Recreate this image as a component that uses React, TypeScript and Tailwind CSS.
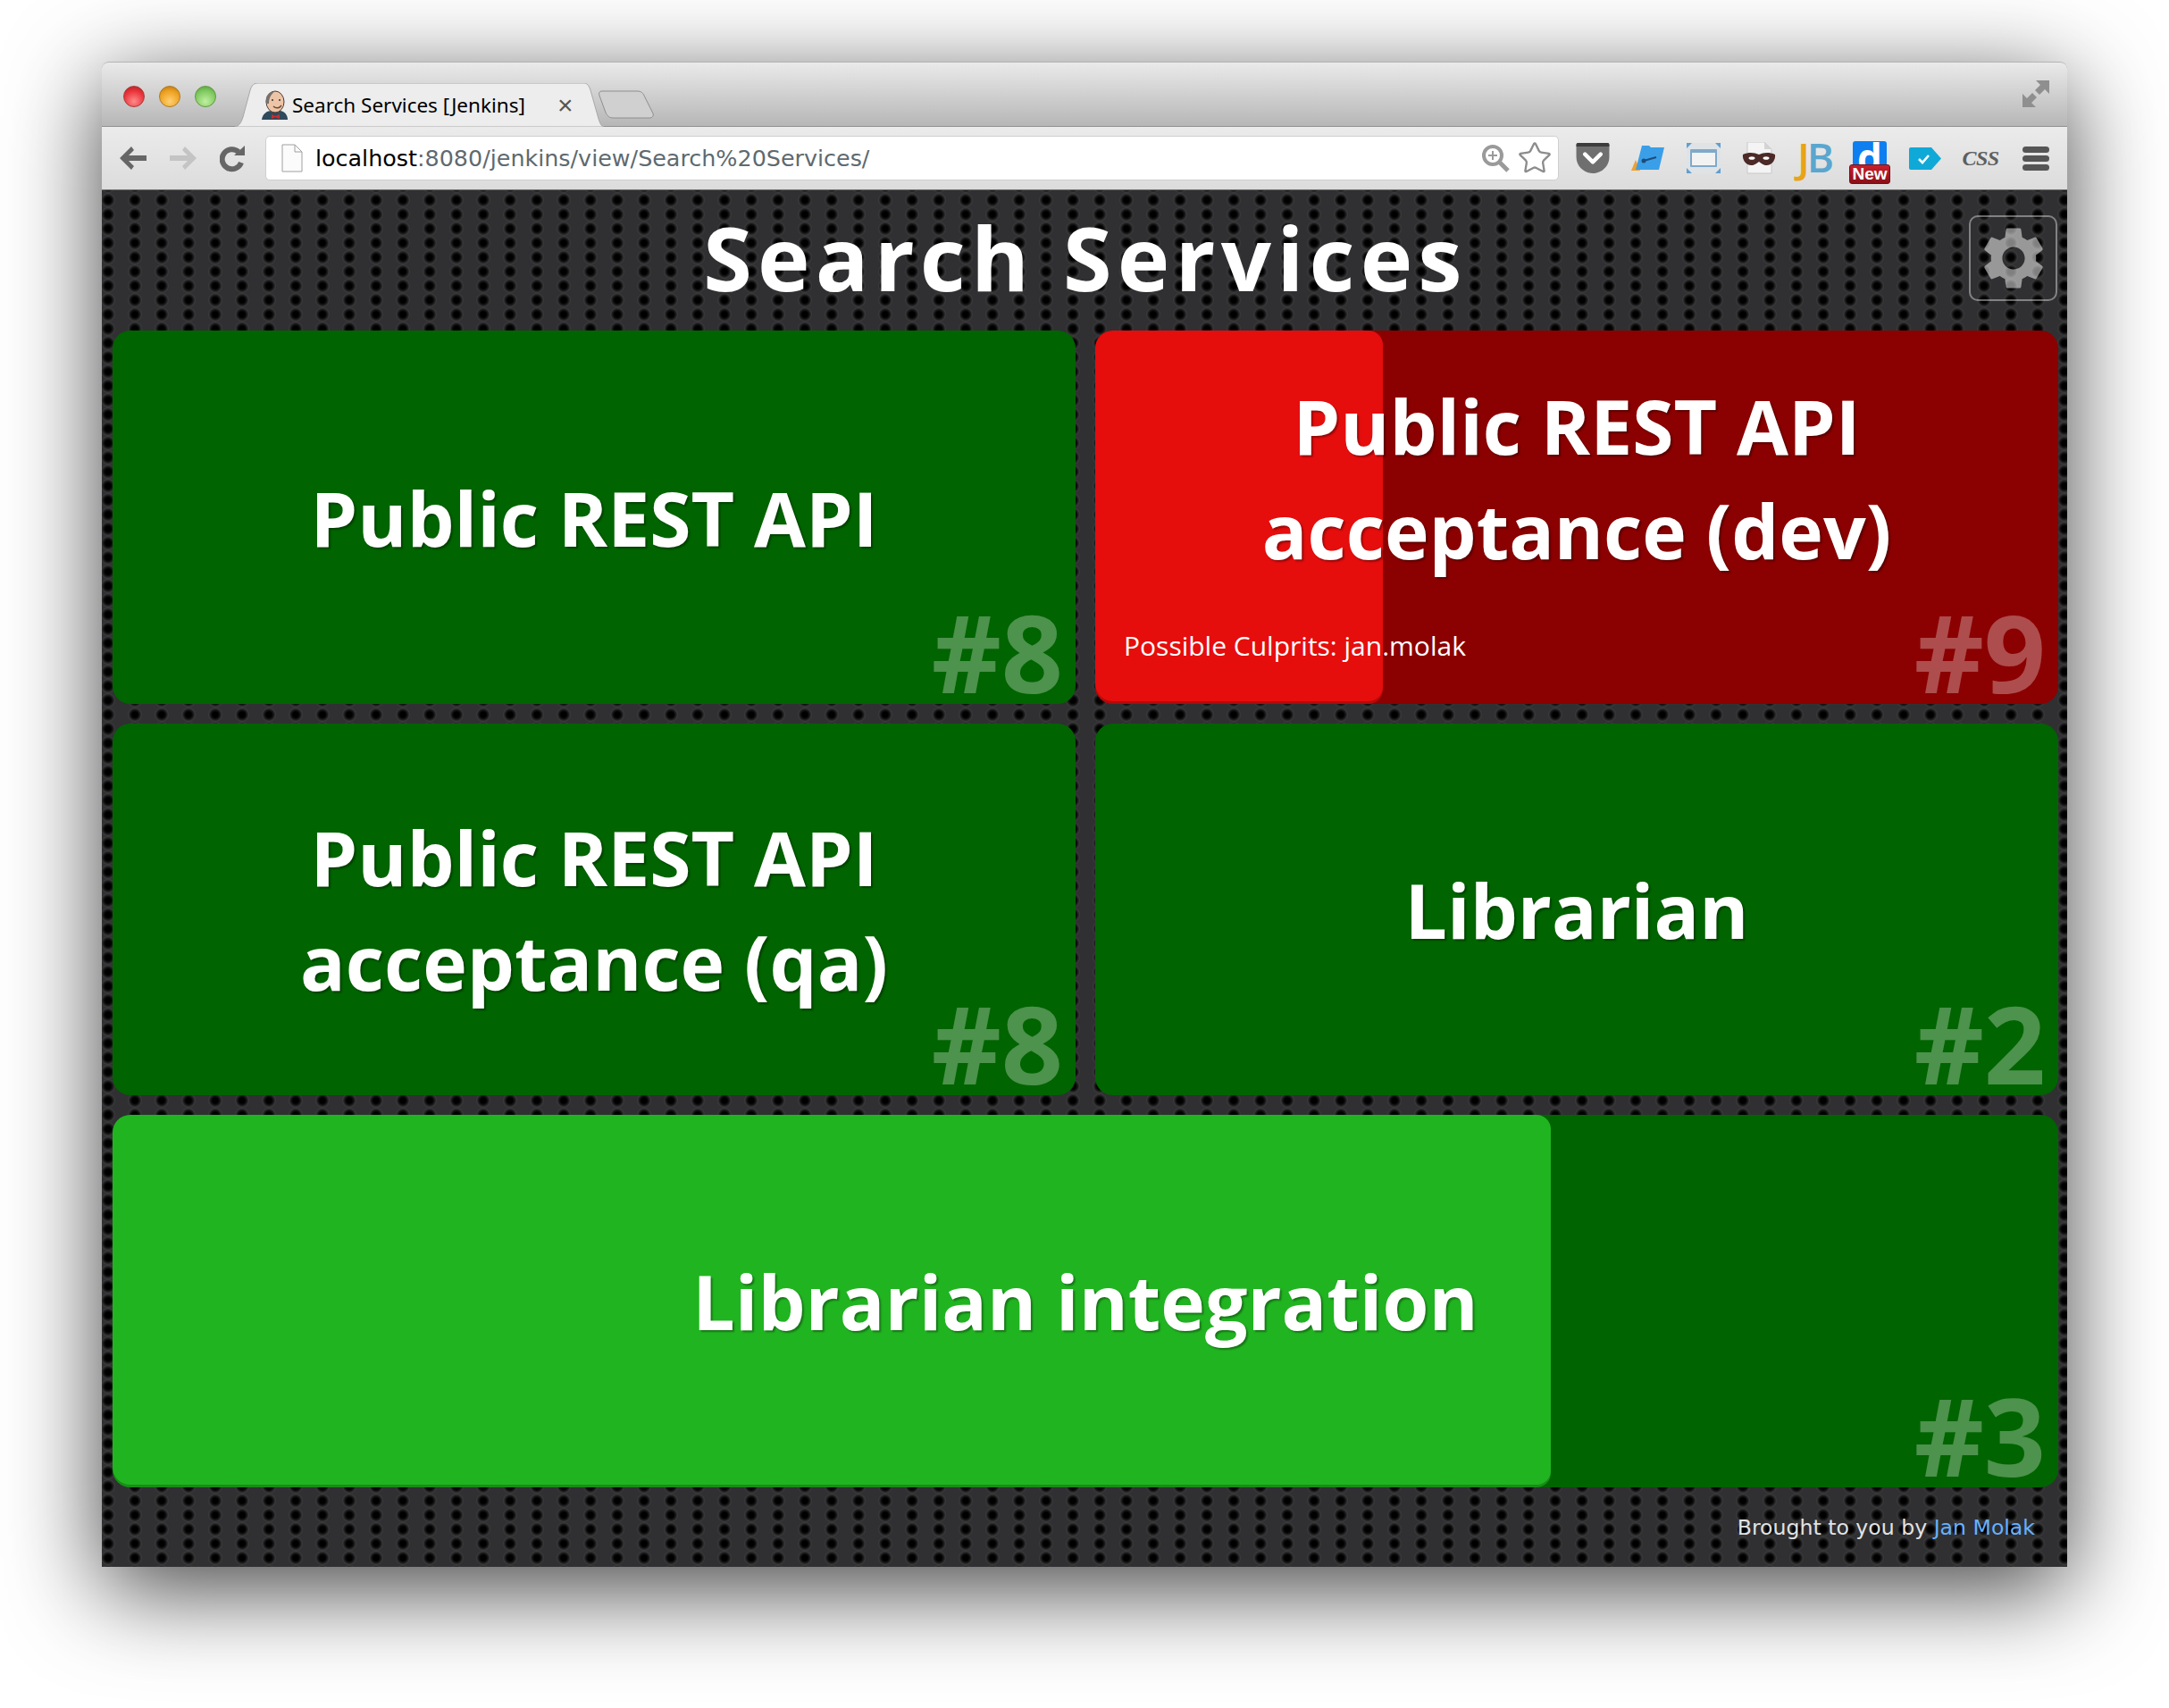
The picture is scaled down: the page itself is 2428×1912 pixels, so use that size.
import React from 'react';
import { Star } from 'lucide-react';
import { MdSettings } from 'react-icons/md';

const Favicon = () => (
  <svg width="32" height="34" viewBox="0 0 32 34">
    <path d="M1 33 C2 26 7 23 12 23 L22 23 C27 24 30 28 30 33 Z" fill="#2e4a5c" />
    <ellipse cx="16" cy="13" rx="10" ry="12" fill="#eec4a6" stroke="#4a3a32" strokeWidth="1" />
    <path d="M6 15 C4 6 10 1 16 1 C12 4 9 8 9 15 Z" fill="#77706c" />
    <path d="M12 27 L16 29 L21 27 L21 32 L16 30 L12 32 Z" fill="#d12a2a" />
    <path d="M14 18 C17 21 21 20 23 17" fill="none" stroke="#6b4a3a" strokeWidth="1.5" />
    <circle cx="13" cy="11" r="1" fill="#333" />
    <circle cx="21" cy="11" r="1" fill="#333" />
  </svg>
);

const Arrow = ({ flip = false, color }: { flip?: boolean; color: string }) => (
  <svg width="34" height="30" viewBox="0 0 34 30" className={flip ? 'rotate-180' : ''}>
    <path d="M15 2 L2 15 L15 28 L18 24 L12 18 L32 18 L32 12 L12 12 L18 6 Z" fill={color} />
  </svg>
);

const Reload = () => (
  <svg width="30" height="32" viewBox="0 0 30 32">
    <path d="M24 21 A11 11 0 1 1 21 9" fill="none" stroke="#666" strokeWidth="6" />
    <path d="M16 13 L28 13 L28 2 Z" fill="#666" />
  </svg>
);

const Pocket = () => (
  <svg width="38" height="34" viewBox="0 0 38 35">
    <path d="M0 2 Q0 0 2 0 L36 0 Q38 0 38 2 L38 16 C38 28 28 35 19 35 C10 35 0 28 0 16 Z" fill="#6f6f6f" />
    <path d="M0 2 Q0 0 2 0 L36 0 Q38 0 38 2 L38 4 L0 4 Z" fill="#3c3c3c" />
    <path d="M10 13 L19 22 L28 13" fill="none" stroke="#fff" strokeWidth="4.5" strokeLinecap="round" strokeLinejoin="round" />
  </svg>
);

const Folder = () => (
  <svg width="38" height="30" viewBox="0 0 38 30">
    <path d="M0 29 L5 17 L10 29 Z" fill="#f0a030" />
    <path d="M12 1 L20 1 L22 3 L37 3 L31 28 L5 28 Z" fill="#3a9fe8" />
    <path d="M14 18 L28 14" stroke="#1c4c78" strokeWidth="2" />
    <circle cx="14" cy="18" r="2.5" fill="#1c4c78" />
  </svg>
);

const FrameIcon = () => (
  <svg width="38" height="34" viewBox="0 0 38 34">
    <rect x="0" y="0" width="38" height="34" fill="#dfe3e6" />
    <path d="M0 0 H6 L0 6 Z M38 0 H32 L38 6 Z M0 34 H6 L0 28 Z M38 34 H32 L38 28 Z" fill="#5f9fd0" />
    <rect x="4" y="7" width="30" height="20" rx="1" fill="#7fa9c9" />
    <rect x="6" y="11" width="26" height="14" fill="#f2f2f2" />
  </svg>
);

const MaskIcon = () => (
  <svg width="38" height="36" viewBox="0 0 38 36">
    <path d="M6 0 L25 0 L33 8 L33 35 L6 35 Z" fill="#f4f4f4" stroke="#c8c8c8" />
    <path d="M25 0 L25 8 L33 8 Z" fill="#d4d4d4" />
    <path d="M1 14 C8 11 14 12 19 14 C24 12 30 11 37 14 C38 20 33 27 26 26 C22 25 21 23 19 22 C17 23 16 25 12 26 C5 27 0 20 1 14 Z" fill="#4b2a27" />
    <ellipse cx="11" cy="18" rx="3.5" ry="1.8" fill="#fff" />
    <ellipse cx="27" cy="18" rx="3.5" ry="1.8" fill="#fff" />
  </svg>
);

const TagIcon = () => (
  <svg width="36" height="25" viewBox="0 0 36 25">
    <path d="M2 0 L25 0 L36 12.5 L25 25 L2 25 Q0 25 0 23 L0 2 Q0 0 2 0 Z" fill="#0fa9d8" />
    <path d="M11 13 L15 17 L22 9" fill="none" stroke="#fff" strokeWidth="2.6" />
  </svg>
);

const Card = ({
  title,
  build,
  dark,
  progress,
  progressWidth,
  culprits,
  span,
}: {
  title: React.ReactNode;
  build: string;
  dark: string;
  progress?: string;
  progressWidth?: string;
  culprits?: string;
  span?: boolean;
}) => (
  <div className={`relative flex flex-col items-center justify-center rounded-[20px] ${dark} ${span ? 'col-span-2' : ''}`}>
    {progress && (
      <div
        className={`absolute inset-y-0 left-0 rounded-l-[20px] rounded-r-[16px] shadow-[inset_0_-3px_0_rgba(0,0,0,0.22)] ${progress}`}
        style={{ width: progressWidth }}
      />
    )}
    <div className="relative text-center font-['Open_Sans',sans-serif] text-[84px] leading-[117px] font-bold text-white [text-shadow:2px_2px_2px_rgba(0,0,0,0.35)]">
      {title}
    </div>
    {culprits && <div className="h-[88px]" />}
    {culprits && (
      <div className="absolute bottom-[43px] left-[32px] font-['Open_Sans',sans-serif] text-[30px] leading-[44px] text-white">
        {culprits}
      </div>
    )}
    <div className="absolute right-[14px] bottom-[1px] font-['Open_Sans',sans-serif] text-[121px] leading-[116px] font-bold text-white/30">
      {build}
    </div>
  </div>
);

export default function App() {
  return (
    <div className="h-[1912px] w-[2428px] overflow-hidden bg-white pt-[69px] pl-[114px]">
      <div className="flex h-[1685px] w-[2200px] flex-col rounded-t-[8px] shadow-[0_25px_105px_rgba(0,0,0,0.74)]">
        {/* Tab strip */}
        <div className="relative flex h-[73px] shrink-0 items-end rounded-t-[8px] border-t border-[#b4b4b4] bg-gradient-to-b from-[#eaeaea] to-[#b6b6b6] shadow-[inset_0_-1px_0_#909090]">
          <div className="flex gap-[16px] self-start pt-[26px] pl-[24px]">
            <div className="h-[24px] w-[24px] rounded-full border border-[#a83a3a] bg-[radial-gradient(circle_at_50%_75%,#ff8a8a,#e8333a_60%,#a81c20)]" />
            <div className="h-[24px] w-[24px] rounded-full border border-[#b07a20] bg-[radial-gradient(circle_at_50%_75%,#ffd070,#eda020_60%,#b06f10)]" />
            <div className="h-[24px] w-[24px] rounded-full border border-[#5c9a40] bg-[radial-gradient(circle_at_50%_75%,#c0f0a0,#80c860_60%,#4f9a38)]" />
          </div>

          <div className="relative ml-[21px] flex h-[49px] w-[413px] items-center pl-[29px]">
            <svg className="absolute inset-0" width="413" height="49" viewBox="0 0 413 49">
              <path
                d="M0 49 C5 48 7 44 9 38 L17 8 C19 2 21 0 27 0 L390 0 C394 0 396 2 398 8 L407 40 C409 46 410 48 413 49 Z"
                fill="#ededed"
                stroke="#a8a8a8"
              />
            </svg>
            <div className="relative"><Favicon /></div>
            <span className="relative ml-[3px] w-[283px] font-['Noto_Sans',sans-serif] text-[22.5px] leading-[30px] whitespace-nowrap text-black">
              Search Services [Jenkins]
            </span>
            <span className="relative ml-[14px] font-['Liberation_Sans',sans-serif] text-[30px] leading-[30px] text-[#555]">×</span>
          </div>
          <svg className="mb-[9px] ml-[-7px]" width="64" height="32" viewBox="0 0 64 32">
            <path d="M5 1 L44 1 C49 1 51 3 53 8 L62 26 C63 29 61 31 58 31 L18 31 C13 31 11 29 9 25 L2 6 C1 3 2 1 5 1 Z" fill="#d0d0d0" stroke="#8e8e8e" />
          </svg>
          <svg className="absolute top-[20px] right-[20px]" width="30" height="30" viewBox="0 0 30 30">
            <path d="M15 0 H30 V15 L25 10 L19 16 L14 11 L20 5 Z M0 15 L5 20 L11 14 L16 19 L10 25 L15 30 H0 Z" fill="#8f8f8f" />
          </svg>
        </div>

        {/* Toolbar */}
        <div className="flex h-[71px] shrink-0 items-center border-b border-[#6e6e6e] bg-gradient-to-b from-[#ebebeb] to-[#dcdcdc] pl-[7px]">
          <div className="flex w-[56px] justify-center"><Arrow color="#666" /></div>
          <div className="flex w-[56px] justify-center"><Arrow flip color="#c4c4c4" /></div>
          <div className="flex w-[56px] justify-center"><Reload /></div>
          <div className="ml-[8px] flex h-[50px] w-[1448px] items-center rounded-[5px] border border-[#cfcfcf] bg-white pr-[6px] pl-[17px]">
            <svg width="24" height="32" viewBox="0 0 24 32">
              <path d="M1 1 L15 1 L23 9 L23 31 L1 31 Z" fill="#fbfbfb" stroke="#a0a0a0" />
              <path d="M15 1 L15 9 L23 9" fill="none" stroke="#a0a0a0" />
            </svg>
            <span className="ml-[14px] flex-1 font-['DejaVu_Sans',sans-serif] text-[25.4px] whitespace-nowrap text-[#5e6a70]">
              <span className="text-black">localhost</span>:8080/jenkins/view/Search%20Services/
            </span>
            <svg width="34" height="34" viewBox="0 0 34 34">
              <circle cx="14" cy="14" r="10" fill="none" stroke="#9a9a9a" strokeWidth="4" />
              <path d="M21 21 L31 31" stroke="#9a9a9a" strokeWidth="5" />
              <path d="M14 9 V19 M9 14 H19" stroke="#9a9a9a" strokeWidth="2" />
            </svg>
            <Star size={40} strokeWidth={1.4} className="ml-[7px] text-[#8c8c8c]" />
          </div>
          <div className="ml-[7px] flex items-center">
            <div className="flex w-[62px] justify-center"><Pocket /></div>
            <div className="flex w-[62px] justify-center"><Folder /></div>
            <div className="flex w-[62px] justify-center"><FrameIcon /></div>
            <div className="flex w-[62px] justify-center"><MaskIcon /></div>
            <div className="mb-[4px] flex w-[62px] justify-center font-['Open_Sans',sans-serif] text-[46px] leading-[48px] font-semibold tracking-[-3px]">
              <span className="text-[#e8a317]">J</span>
              <span className="text-[#5aa6cf]">B</span>
            </div>
            <div className="flex w-[62px] justify-center">
              <div className="relative mt-[10px] h-[48px] w-[38px]">
                <div className="h-[34px] w-[38px] rounded-t-[3px] bg-[#0d7ff0] text-center font-['Open_Sans',sans-serif] text-[44px] leading-[36px] font-bold text-white">
                  d
                </div>
                <div className="absolute top-[26px] left-[-4px] h-[22px] w-[46px] rounded-[3px] border border-[#7a0c14] bg-gradient-to-b from-[#c8202c] to-[#8a0f18] text-center font-['Liberation_Sans',sans-serif] text-[19px] leading-[20px] font-bold text-white">
                  New
                </div>
              </div>
            </div>
            <div className="flex w-[62px] justify-center"><TagIcon /></div>
            <div className="flex w-[62px] justify-center font-['Liberation_Serif',serif] text-[24px] leading-[30px] font-bold tracking-[-0.5px] text-[#5f5f5f] italic">
              CSS
            </div>
            <div className="flex w-[62px] flex-col items-center gap-[3px]">
              <div className="h-[7px] w-[30px] rounded-full bg-[#555]" />
              <div className="h-[7px] w-[30px] rounded-full bg-[#555]" />
              <div className="h-[7px] w-[30px] rounded-full bg-[#555]" />
            </div>
          </div>
        </div>

        {/* Dashboard */}
        <div className="relative flex flex-1 flex-col bg-[#303032] bg-[radial-gradient(circle,#000_0,#000_3px,#0e0e0f_4.5px,#232324_6px,#39393b_7.4px,#303032_8.5px),radial-gradient(circle,#000_0,#000_3px,#0e0e0f_4.5px,#232324_6px,#39393b_7.4px,#303032_8.5px)] bg-[length:30px_16px] pr-[10px] pl-[12px] [background-position:-8px_3px,7px_-5px]">
          <div className="flex h-[157px] shrink-0 items-center justify-center pb-[6px] font-['Open_Sans',sans-serif] text-[99px] font-bold tracking-[6.2px] text-white">
            Search Services
          </div>
          <div className="absolute top-[28px] right-[11px] flex h-[96px] w-[99px] items-center justify-center rounded-[10px] border-2 border-white/40">
            <MdSettings size={84} className="text-white/50" />
          </div>
          <div className="grid flex-1 grid-cols-2 grid-rows-[418px_416px_417px] gap-[22px]">
            <Card title="Public REST API" build="#8" dark="bg-[#006400]" />
            <Card
              title={<>Public REST API<br />acceptance (dev)</>}
              build="#9"
              dark="bg-[#8b0000]"
              progress="bg-[#e60d0d]"
              progressWidth="322px"
              culprits="Possible Culprits: jan.molak"
            />
            <Card title={<>Public REST API<br />acceptance (qa)</>} build="#8" dark="bg-[#006400]" />
            <Card title="Librarian" build="#2" dark="bg-[#006400]" />
            <Card
              title="Librarian integration"
              build="#3"
              dark="bg-[#006400]"
              progress="bg-[#21b421]"
              progressWidth="1610px"
              span
            />
          </div>
          <div className="flex h-[89px] shrink-0 items-center justify-end pt-[2px] pr-[26px] font-['DejaVu_Sans',sans-serif] text-[23.6px] text-[#e2e2e2]">
            Brought to you by&nbsp;<span className="text-[#66b0ff]">Jan Molak</span>
          </div>
        </div>
      </div>
    </div>
  );
}
